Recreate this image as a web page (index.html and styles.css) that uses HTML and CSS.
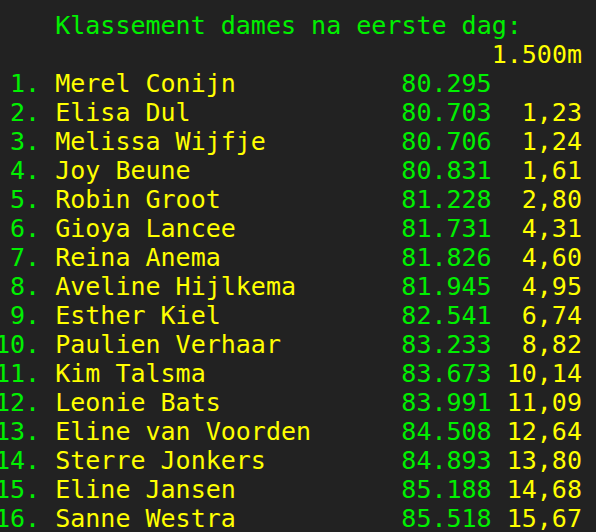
FILE: index.html
```
<!DOCTYPE html>
<html lang="nl">
<head>
    <meta charset="UTF-8">
    <meta name="viewport" content="width=device-width, initial-scale=1.0">
    <title>Klassement dames</title>
    <link rel="stylesheet" href="styles.css">
</head>
<body>

    <div class="page">
        <!-- Kop -->
        <div class="title">Klassement dames na eerste dag:</div>
        <div class="distance">1.500m</div>

        <!-- Klassement -->
        <div class="standings">
            <div class="row"><span class="rank">1.</span><span class="name">Merel Conijn</span><span class="time">80.295</span><span class="diff"></span></div>
            <div class="row"><span class="rank">2.</span><span class="name">Elisa Dul</span><span class="time">80.703</span><span class="diff">1,23</span></div>
            <div class="row"><span class="rank">3.</span><span class="name">Melissa Wijfje</span><span class="time">80.706</span><span class="diff">1,24</span></div>
            <div class="row"><span class="rank">4.</span><span class="name">Joy Beune</span><span class="time">80.831</span><span class="diff">1,61</span></div>
            <div class="row"><span class="rank">5.</span><span class="name">Robin Groot</span><span class="time">81.228</span><span class="diff">2,80</span></div>
            <div class="row"><span class="rank">6.</span><span class="name">Gioya Lancee</span><span class="time">81.731</span><span class="diff">4,31</span></div>
            <div class="row"><span class="rank">7.</span><span class="name">Reina Anema</span><span class="time">81.826</span><span class="diff">4,60</span></div>
            <div class="row"><span class="rank">8.</span><span class="name">Aveline Hijlkema</span><span class="time">81.945</span><span class="diff">4,95</span></div>
            <div class="row"><span class="rank">9.</span><span class="name">Esther Kiel</span><span class="time">82.541</span><span class="diff">6,74</span></div>
            <div class="row"><span class="rank">10.</span><span class="name">Paulien Verhaar</span><span class="time">83.233</span><span class="diff">8,82</span></div>
            <div class="row"><span class="rank">11.</span><span class="name">Kim Talsma</span><span class="time">83.673</span><span class="diff">10,14</span></div>
            <div class="row"><span class="rank">12.</span><span class="name">Leonie Bats</span><span class="time">83.991</span><span class="diff">11,09</span></div>
            <div class="row"><span class="rank">13.</span><span class="name">Eline van Voorden</span><span class="time">84.508</span><span class="diff">12,64</span></div>
            <div class="row"><span class="rank">14.</span><span class="name">Sterre Jonkers</span><span class="time">84.893</span><span class="diff">13,80</span></div>
            <div class="row"><span class="rank">15.</span><span class="name">Eline Jansen</span><span class="time">85.188</span><span class="diff">14,68</span></div>
            <div class="row"><span class="rank">16.</span><span class="name">Sanne Westra</span><span class="time">85.518</span><span class="diff">15,67</span></div>
        </div>
    </div>

</body>
</html>
```

FILE: styles.css
```
body {
    margin: 0;
    background-color: #222222;
    font-family: "DejaVu Sans Mono", "Liberation Mono", monospace;
    font-size: 25px;
    line-height: 29px;
}
.page {
    width: 39ch;
    margin-left: -5px;
    padding-top: 11px;
}
.title {
    color: #00f000;
    padding-left: 4ch;
    white-space: pre;
}
.distance {
    color: #ffff00;
    text-align: right;
}
.row {
    display: grid;
    grid-template-columns: 3ch 22ch 6ch 5ch;
    column-gap: 1ch;
    white-space: pre;
}
.rank {
    color: #00f000;
    text-align: right;
}
.name {
    color: #ffff00;
}
.time {
    color: #00f000;
}
.diff {
    color: #ffff00;
    text-align: right;
}
```
